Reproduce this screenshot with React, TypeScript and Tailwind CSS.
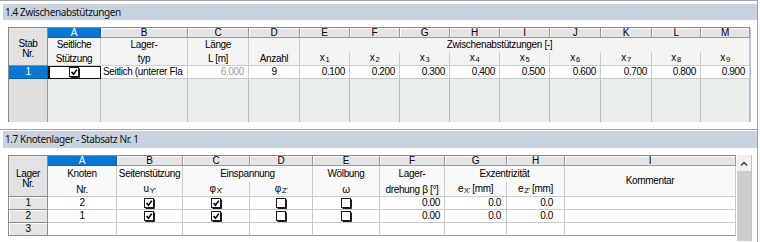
import React from 'react'

const tbl = "font-['Liberation_Sans',Arial,sans-serif] text-[10px] tracking-[-0.35px] text-black"
const ttl = "font-['Noto_Sans',sans-serif] text-[10px] tracking-[-0.4px] text-[#111]"

const letter = 'flex items-center justify-center bg-[#e4e4e4] border-r border-b border-[#9a9a9a] shadow-[inset_1px_1px_0_#fcfcfc] leading-none'
const letterSel = 'flex items-center justify-center bg-[#0a77d5] text-white border-r border-b border-[#0b5fae] leading-none'
const rowHead = 'flex items-center justify-center bg-[#e4e4e4] border-r border-b border-[#8c8c8c] shadow-[inset_1px_1px_0_#fcfcfc] leading-none'
const nameCell = 'bg-[#f4f4f4] border-r border-b border-[#cdcdcd] leading-none'
const dataCell = 'flex items-center bg-white border-r border-b border-[#c9c9c9] leading-none whitespace-nowrap overflow-hidden'

function Box({ checked }: { checked?: boolean }) {
  return (
    <svg width="11" height="11" viewBox="0 0 11 11" className="block shrink-0">
      <rect x="0.5" y="0.5" width="9" height="9" fill="#fff" stroke="#1a1a1a" />
      <path d="M1.5 10.5H10.5V1.5" stroke="#1a1a1a" fill="none" />
      {checked && <path d="M2.6 5 4.5 7.2 7.8 2.6" stroke="#000" strokeWidth="1.6" fill="none" />}
    </svg>
  )
}

function Sub({ b, s }: { b: string; s: string }) {
  return (
    <span>
      {b}
      <span className="ml-[1px] align-[-1px] text-[7.5px]">{s}</span>
    </span>
  )
}

function TwoLine({ a, b, h }: { a?: React.ReactNode; b?: React.ReactNode; h: string }) {
  return (
    <>
      <div className={`flex ${h} items-center justify-center`}>{a}</div>
      <div className={`flex ${h} items-center justify-center`}>{b}</div>
    </>
  )
}

function TopTable() {
  const letters = ['A', 'B', 'C', 'D', 'E', 'F', 'G', 'H', 'I', 'J', 'K', 'L', 'M']
  const xs = ['1', '2', '3', '4', '5', '6', '7', '8', '9']
  const vals = ['0.100', '0.200', '0.300', '0.400', '0.500', '0.600', '0.700', '0.800', '0.900']
  return (
    <div className="ml-[8px] mt-[7px] flex">
      <div className={`grid grid-cols-[39px_53px_87px_61px_51px_50px_50px_50px_50px_50px_51px_51px_49px_49px] grid-rows-[10px_14px_14px_13px_43px] border-l border-t border-[#8a8a8a] ${tbl}`}>
        <div className="row-span-3 flex flex-col items-center bg-[#e2e2e2] border-r border-b border-[#8c8c8c] pt-[11px] leading-[10px]">
          <span>Stab</span>
          <span>Nr.</span>
        </div>
        {letters.map((l) => (
          <div key={l} className={l === 'A' ? letterSel : letter}>{l}</div>
        ))}
        <div className={`row-span-2 ${nameCell}`}>
          <TwoLine a="Seitliche" b="Stützung" h="h-[14px]" />
        </div>
        <div className={`row-span-2 ${nameCell}`}>
          <TwoLine a="Lager-" b="typ" h="h-[14px]" />
        </div>
        <div className={`row-span-2 ${nameCell}`}>
          <TwoLine a="Länge" b="L [m]" h="h-[14px]" />
        </div>
        <div className={`row-span-2 ${nameCell}`}>
          <TwoLine b="Anzahl" h="h-[14px]" />
        </div>
        <div className="col-span-9 flex items-center justify-center bg-[#f4f4f4] border-r border-[#cdcdcd] pr-[50px] leading-none">
          Zwischenabstützungen [-]
        </div>
        {xs.map((x) => (
          <div key={x} className={`flex items-center justify-center ${nameCell}`}>
            <Sub b="x" s={x} />
          </div>
        ))}
        <div className="flex items-center justify-center bg-[#0a77d5] text-white border-r border-b border-[#0b5fae] leading-none">1</div>
        <div className="flex items-center justify-center bg-white border border-[#111] shadow-[inset_1px_0_0_#111]">
          <Box checked />
        </div>
        <div className={`${dataCell} pl-[2px]`}>Seitlich (unterer Fla</div>
        <div className={`${dataCell} justify-end bg-[#f1f1f1] pr-[4px] text-[#9c9c9c]`}>6.000</div>
        <div className={`${dataCell} justify-center`}>9</div>
        {vals.map((v) => (
          <div key={v} className={`${dataCell} justify-end pr-[4px]`}>{v}</div>
        ))}
        <div className="bg-[#dfdfdf] border-r border-[#9a9a9a]" />
        {letters.map((l) => (
          <div key={l} className="bg-[#e9eeec] border-r border-[#b9b9b9]" />
        ))}
      </div>
      <div className="mt-[1px] w-px bg-[#bcc0e2]" />
    </div>
  )
}

function BottomTable() {
  const letters = ['A', 'B', 'C', 'D', 'E', 'F', 'G', 'H', 'I']
  const rows = [
    { n: '1', k: '2', b: true, c: true, f: '0.00', g: '0.0', h: '0.0' },
    { n: '2', k: '1', b: true, c: true, f: '0.00', g: '0.0', h: '0.0' },
  ]
  return (
    <div className="ml-[8px] mt-[7px] flex">
      <div className={`grid grid-cols-[39px_69px_66px_67px_63px_67px_65px_62px_58px_171px] grid-rows-[10px_16px_15px_13px_13px_13px] self-start border-l border-t border-[#8a8a8a] ${tbl}`}>
        <div className="row-span-3 flex flex-col items-center bg-[#e2e2e2] border-r border-b border-[#8c8c8c] pt-[13px] leading-[10px]">
          <span>Lager</span>
          <span>Nr.</span>
        </div>
        {letters.map((l) => (
          <div key={l} className={l === 'A' ? letterSel : letter}>{l}</div>
        ))}
        <div className={`row-span-2 ${nameCell} bg-[#f9f9f9]`}>
          <div className="flex h-[16px] items-center justify-center">Knoten</div>
          <div className="flex h-[15px] items-center justify-center">Nr.</div>
        </div>
        <div className={`row-span-2 ${nameCell} bg-[#f9f9f9]`}>
          <div className="flex h-[16px] items-center justify-center">Seitenstützung</div>
          <div className="flex h-[15px] items-center justify-center">
            <Sub b="u" s="Y'" />
          </div>
        </div>
        <div className="col-span-2 flex items-center justify-center bg-[#f9f9f9] border-r border-[#cdcdcd] leading-none">Einspannung</div>
        <div className={`row-span-2 ${nameCell} bg-[#f9f9f9]`}>
          <div className="flex h-[16px] items-center justify-center">Wölbung</div>
          <div className="flex h-[15px] items-center justify-center">ω</div>
        </div>
        <div className={`row-span-2 ${nameCell} bg-[#f9f9f9]`}>
          <div className="flex h-[16px] items-center justify-center">Lager-</div>
          <div className="flex h-[15px] items-center justify-center">drehung β [°]</div>
        </div>
        <div className="col-span-2 flex items-center justify-center bg-[#f9f9f9] border-r border-[#cdcdcd] leading-none">Exzentrizität</div>
        <div className={`row-span-2 flex items-center justify-center ${nameCell} bg-[#f9f9f9]`}>Kommentar</div>
        <div className={`flex items-center justify-center ${nameCell} bg-[#f9f9f9]`}>
          <Sub b="φ" s="X'" />
        </div>
        <div className={`flex items-center justify-center ${nameCell} bg-[#f9f9f9]`}>
          <Sub b="φ" s="Z'" />
        </div>
        <div className={`flex items-center justify-center ${nameCell} bg-[#f9f9f9]`}>
          <span>
            <Sub b="e" s="X'" /> [mm]
          </span>
        </div>
        <div className={`flex items-center justify-center ${nameCell} bg-[#f9f9f9]`}>
          <span>
            <Sub b="e" s="Z'" /> [mm]
          </span>
        </div>
        {rows.map((r) => (
          <React.Fragment key={r.n}>
            <div className={rowHead}>{r.n}</div>
            <div className={`${dataCell} justify-center`}>{r.k}</div>
            <div className={`${dataCell} justify-center`}><Box checked={r.b} /></div>
            <div className={`${dataCell} justify-center`}><Box checked={r.c} /></div>
            <div className={`${dataCell} justify-center`}><Box /></div>
            <div className={`${dataCell} justify-center`}><Box /></div>
            <div className={`${dataCell} justify-end pr-[4px]`}>{r.f}</div>
            <div className={`${dataCell} justify-end pr-[5px]`}>{r.g}</div>
            <div className={`${dataCell} justify-end pr-[11px]`}>{r.h}</div>
            <div className={dataCell} />
          </React.Fragment>
        ))}
        <div className={rowHead}>3</div>
        {letters.map((l) => (
          <div key={l} className={`${dataCell} border-b-[#9a9a9a]`} />
        ))}
      </div>
      <div className="ml-px flex h-[86px] w-[14px] flex-col">
        <div className="flex h-[16px] items-center justify-center bg-[#f0f0f0]">
          <svg width="8" height="5" viewBox="0 0 8 5">
            <path d="M1 4.5 4 1.5 7 4.5" stroke="#333" strokeWidth="1.4" fill="none" />
          </svg>
        </div>
        <div className="flex-1 bg-[#cdcdcd]" />
      </div>
      <div className="h-[86px] w-px bg-[#bcc0e2]" />
    </div>
  )
}

export default function App() {
  return (
    <div className="h-[242px] w-[760px] overflow-hidden bg-white">
      <div className="flex h-full w-[758px] flex-col border-r border-[#a3a3a3]">
        <div className="h-px bg-[#a3a3a3]" />
        <div className={`ml-[3px] mt-[3px] flex h-[16px] items-center bg-[#c7d4e0] pl-[2px] ${ttl}`}>1.4 Zwischenabstützungen</div>
        <TopTable />
        <div className="mt-[7px] h-px bg-[#a3a3a3]" />
        <div className={`ml-[3px] mt-[1px] flex h-[17px] items-center bg-[#c7d4e0] pl-[2px] ${ttl}`}>1.7 Knotenlager - Stabsatz Nr. 1</div>
        <BottomTable />
      </div>
    </div>
  )
}
